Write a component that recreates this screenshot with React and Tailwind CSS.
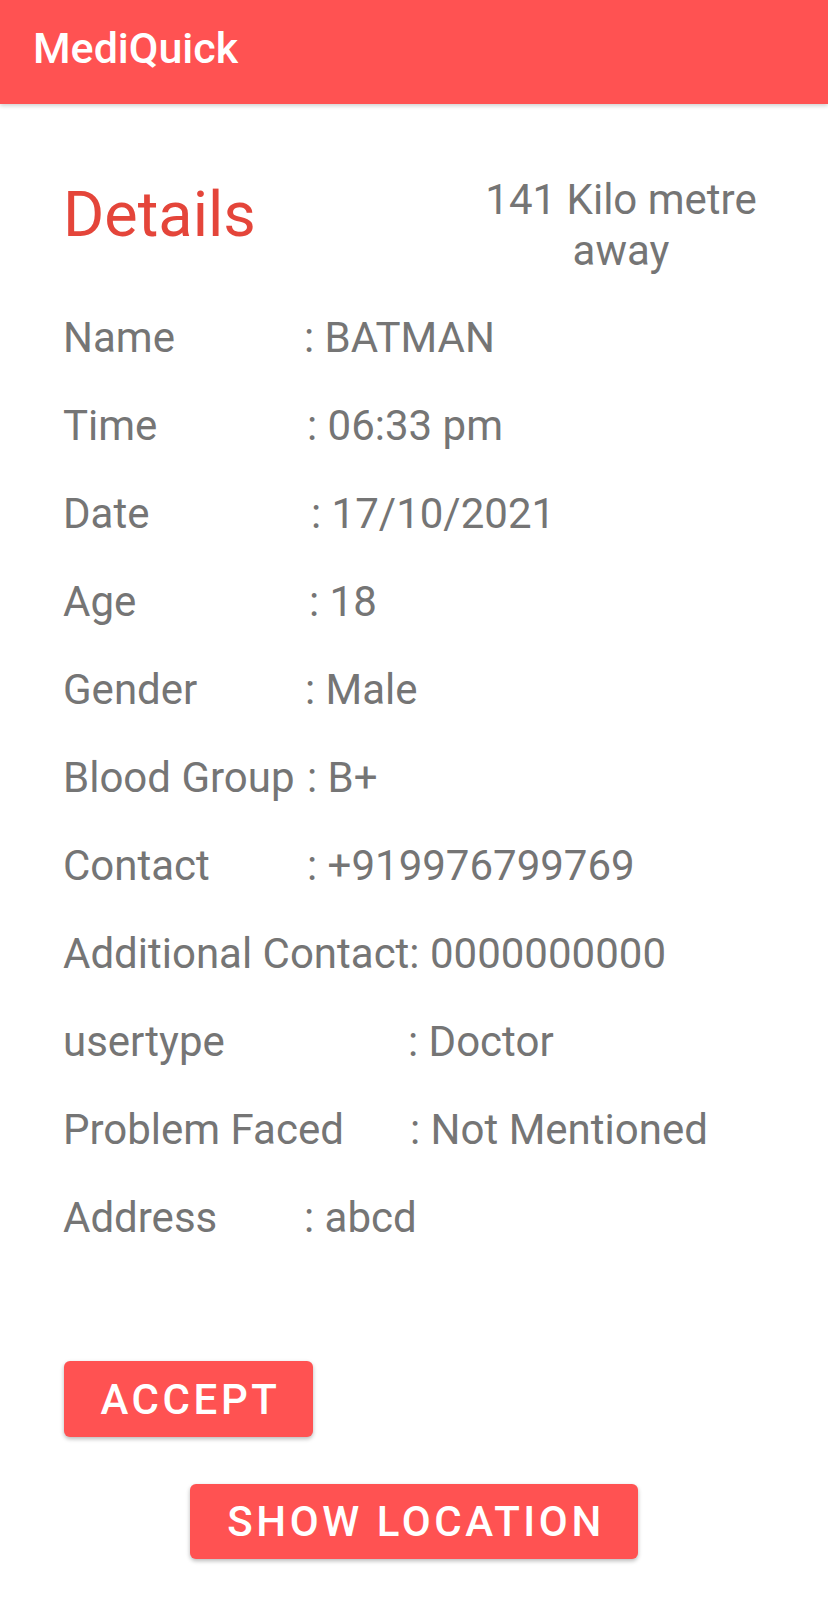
// request details screen: red app bar, patient info rows and two action buttons
const rows = [
  { label: "Name", width: "w-[241px]", value: "BATMAN" },
  { label: "Time", width: "w-[244px]", value: "06:33 pm" },
  { label: "Date", width: "w-[248px]", value: "17/10/2021" },
  { label: "Age", width: "w-[246px]", value: "18" },
  { label: "Gender", width: "w-[242px]", value: "Male" },
  { label: "Blood Group", width: "w-[244px]", value: "B+" },
  { label: "Contact", width: "w-[244px]", value: "+919976799769" },
  { label: null, text: "Additional Contact: 0000000000" },
  { label: "usertype", width: "w-[345px]", value: "Doctor" },
  { label: "Problem Faced", width: "w-[347px]", value: "Not Mentioned" },
  { label: "Address", width: "w-[241px]", value: "abcd" },
];

const InfoRow = ({ row }) => {
  if (!row.label) {
    return <div className="leading-[88px] whitespace-nowrap">{row.text}</div>;
  }
  return (
    <div className="flex leading-[88px] whitespace-nowrap">
      <span className={`${row.width} shrink-0`}>{row.label}</span>
      <span>: {row.value}</span>
    </div>
  );
};

export default function App() {
  return (
    <div className="min-h-[1600px] bg-white font-['Roboto',_sans-serif]">
      {/* app bar */}
      <div className="relative z-10 flex h-[104px] items-center bg-[#FF5252] pb-[8px] pl-[33px] shadow-[0_2px_4px_rgba(0,0,0,0.18)]">
        <span className="text-[43px] font-medium text-white">MediQuick</span>
      </div>

      {/* title + distance */}
      <div className="mt-[70px] flex items-start">
        <div className="w-1/2 pl-[63px] pt-[5px]">
          <h1 className="text-[63px] leading-[72px] text-[#E4453A]">Details</h1>
        </div>
        <div className="w-1/2 text-center text-[42px] leading-[51px] text-[#757575]">
          141 Kilo metre
          <br />
          away
        </div>
      </div>

      {/* info rows */}
      <div className="mt-[18px] pl-[63px] text-[42px] text-[#757575]">
        {rows.map((row, i) => (
          <InfoRow key={i} row={row} />
        ))}
      </div>

      {/* buttons */}
      <div className="mt-[99px] pl-[64px]">
        <button className="flex h-[76px] w-[249px] items-center justify-center rounded-[6px] bg-[#FF5252] pl-[4px] text-[42px] font-medium tracking-[3.6px] text-white shadow-[0_2px_4px_rgba(0,0,0,0.28)]">
          ACCEPT
        </button>
      </div>
      <div className="mt-[47px] flex justify-center">
        <button className="flex h-[75px] w-[448px] items-center justify-center rounded-[6px] bg-[#FF5252] pl-[4px] text-[42px] font-medium tracking-[3.6px] text-white shadow-[0_2px_4px_rgba(0,0,0,0.28)]">
          SHOW LOCATION
        </button>
      </div>
    </div>
  );
}
